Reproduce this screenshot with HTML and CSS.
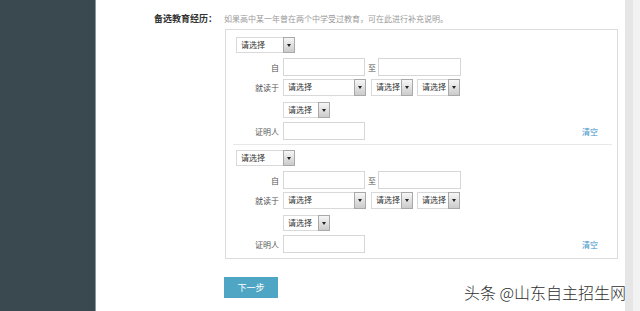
FILE: index.html
```html
<!DOCTYPE html>
<html lang="zh">
<head>
<meta charset="utf-8">
<link rel="stylesheet" href="styles.css">
</head>
<body>
<div class="page">
  <div class="sidebar"></div>
  <div class="main">
    <div class="head-label">备选教育经历：</div>
    <div class="content">
      <div class="hint">如果高中某一年曾在两个中学受过教育，可在此进行补充说明。</div>
      <div class="box">
        <div class="section">
          <div class="row first">
            <div class="sel w59"><span class="txt">请选择</span><span class="arr"><i></i></span></div>
          </div>
          <div class="row r2">
            <span class="lbl">自</span>
            <span class="inp w82"></span>
            <span class="to">至</span>
            <span class="inp w83"></span>
          </div>
          <div class="row r3">
            <span class="lbl">就读于</span>
            <div class="sel w83"><span class="txt">请选择</span><span class="arr"><i></i></span></div>
            <div class="sel w42 g5"><span class="txt">请选择</span><span class="arr"><i></i></span></div>
            <div class="sel w43 g4"><span class="txt">请选择</span><span class="arr"><i></i></span></div>
          </div>
          <div class="row r4">
            <span class="lbl"></span>
            <div class="sel w47"><span class="txt">请选择</span><span class="arr"><i></i></span></div>
          </div>
          <div class="row r5">
            <span class="lbl">证明人</span>
            <span class="inp w82"></span>
            <a class="clear">清空</a>
          </div>
        </div>
        <div class="section last">
          <div class="row first">
            <div class="sel w59"><span class="txt">请选择</span><span class="arr"><i></i></span></div>
          </div>
          <div class="row r2">
            <span class="lbl">自</span>
            <span class="inp w82"></span>
            <span class="to">至</span>
            <span class="inp w83"></span>
          </div>
          <div class="row r3">
            <span class="lbl">就读于</span>
            <div class="sel w83"><span class="txt">请选择</span><span class="arr"><i></i></span></div>
            <div class="sel w42 g5"><span class="txt">请选择</span><span class="arr"><i></i></span></div>
            <div class="sel w43 g4"><span class="txt">请选择</span><span class="arr"><i></i></span></div>
          </div>
          <div class="row r4">
            <span class="lbl"></span>
            <div class="sel w47"><span class="txt">请选择</span><span class="arr"><i></i></span></div>
          </div>
          <div class="row r5">
            <span class="lbl">证明人</span>
            <span class="inp w82"></span>
            <a class="clear">清空</a>
          </div>
        </div>
      </div>
      <button class="next">下一步</button>
    </div>
  </div>
  <div class="scroll"><div class="track-a"></div><div class="track-b"></div></div>
  <div class="watermark">头条 @山东自主招生网</div>
</div>
</body>
</html>
```

FILE: styles.css
```css
html, body {
  margin: 0;
  padding: 0;
  background: #fff;
}
body {
  font-family: "Noto Sans CJK SC", "Noto Sans", sans-serif;
  color: #333;
}
.page {
  position: relative;
  display: flex;
  width: 640px;
  height: 311px;
  overflow: hidden;
}
.sidebar {
  width: 95px;
  flex: none;
  background: #3a4950;
  border-right: 1px solid #8b979c;
}
.main {
  flex: 1;
  display: grid;
  grid-template-columns: 128px auto;
  align-content: start;
  padding-top: 12px;
}
.head-label {
  text-align: right;
  padding-right: 7px;
  font-size: 9px;
  font-weight: bold;
  line-height: 14px;
  color: #333;
}
.hint {
  font-size: 8px;
  line-height: 14px;
  color: #9a9a9a;
  margin-bottom: 3px;
}
.box {
  margin-left: 1px;
  width: 393px;
  box-sizing: border-box;
  border: 1px solid #dcdcdc;
  padding: 0 5px 0 7px;
}
.section {
  padding: 7px 0 4px 3px;
  border-bottom: 1px solid #e8e8e8;
}
.section.last {
  border-bottom: none;
  padding-top: 5px;
  padding-bottom: 5px;
}
.row {
  display: flex;
  align-items: center;
}
.row.r2 { margin-top: 5px; }
.row.r3 { margin-top: 3px; }
.row.r4 { margin-top: 6px; }
.row.r5 { margin-top: 4px; }
.lbl {
  width: 43px;
  margin-right: 4px;
  text-align: right;
  font-size: 8px;
  color: #555;
}
.sel {
  display: flex;
  height: 16px;
  box-sizing: border-box;
  border: 1px solid #d9d9d9;
  background: #fff;
}
.r3 .sel { height: 17px; }
.sel .txt {
  flex: 1;
  font-size: 8px;
  line-height: 14px;
  padding-left: 4px;
  color: #333;
  white-space: nowrap;
  overflow: hidden;
}
.sel .arr {
  width: 10px;
  margin: -1px -1px -1px 0;
  border: 1px solid #a9a9a9;
  background: linear-gradient(#f6f6f6, #cbcbcb);
  display: flex;
  align-items: center;
  justify-content: center;
}
.sel .arr i {
  display: block;
  width: 0;
  height: 0;
  border-top: 3px solid #222;
  border-left: 2px solid transparent;
  border-right: 2px solid transparent;
}
.w59 { width: 59px; }
.w83 { width: 83px; }
.w42 { width: 42px; }
.w43 { width: 43px; }
.w47 { width: 47px; }
.w82 { width: 82px; }
.g5 { margin-left: 5px; }
.g4 { margin-left: 4px; }
.inp {
  display: block;
  height: 18px;
  box-sizing: border-box;
  border: 1px solid #d6d6d6;
  background: #fff;
}
.to {
  font-size: 8px;
  color: #555;
  margin: 0 2px 0 3px;
}
.clear {
  margin-left: auto;
  margin-right: 14px;
  font-size: 8px;
  color: #3c92c8;
  text-decoration: none;
}
.next {
  display: block;
  margin-top: 18px;
  width: 54px;
  height: 21px;
  border: none;
  padding: 0;
  background: #4fa6c4;
  color: #fff;
  font-family: "Noto Sans CJK SC", sans-serif;
  font-size: 9px;
}
.scroll {
  width: 15px;
  flex: none;
  display: flex;
}
.track-a {
  width: 8px;
  background: #e6e6e6;
}
.track-b {
  flex: 1;
  background: #f2f2f2;
}
.watermark {
  position: absolute;
  left: 464px;
  top: 281px;
  font-size: 16px;
  line-height: 22px;
  font-weight: 300;
  color: #2e2e2e;
  white-space: nowrap;
  text-shadow: 0 0 2px #fff, 0 0 2px #fff;
}
```
